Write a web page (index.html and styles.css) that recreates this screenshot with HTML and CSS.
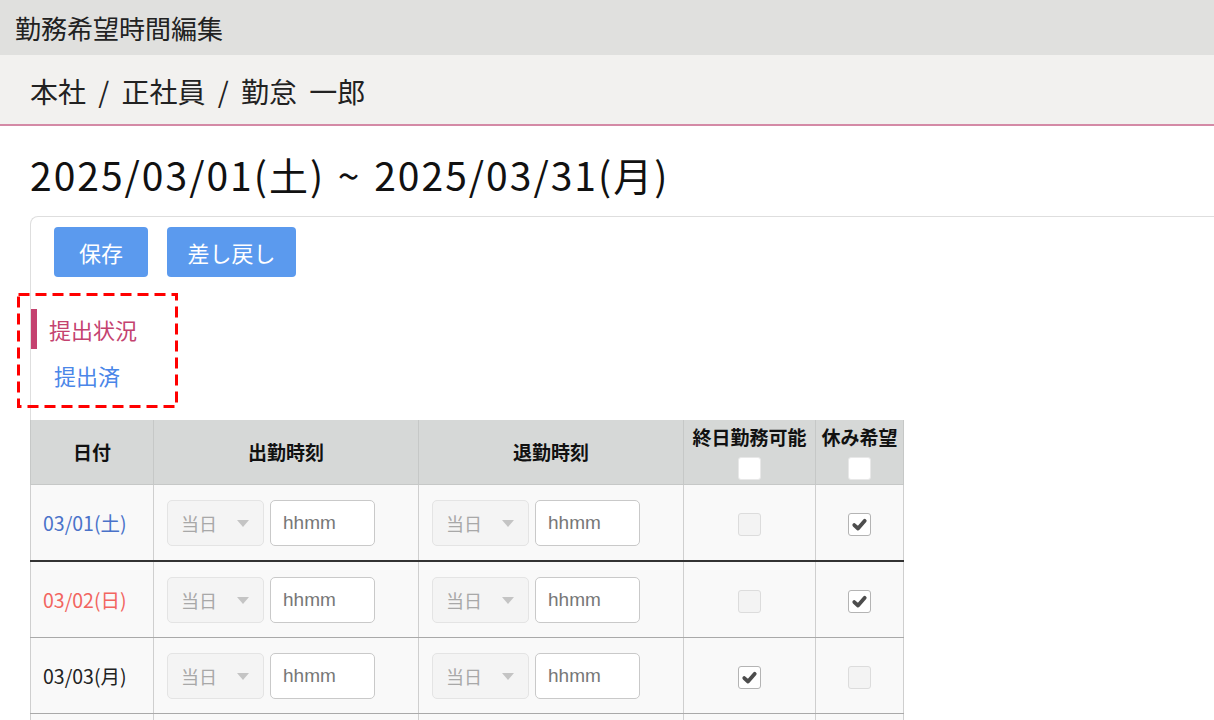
FILE: index.html
```html
<!DOCTYPE html>
<html lang="ja">
<head>
    <meta charset="UTF-8">
    <meta name="viewport" content="width=device-width, initial-scale=1.0">
    <title>勤務希望時間編集</title>
    <link rel="stylesheet" href="styles.css">
</head>
<body>

    <!-- Title bar -->
    <div class="titlebar">勤務希望時間編集</div>

    <!-- Employee -->
    <div class="subbar">本社 / 正社員 / 勤怠 一郎</div>

    <h1 class="period">2025/03/01(土) ~ 2025/03/31(月)</h1>

    <div class="panel">
        <div class="actions">
            <button class="btn">保存</button>
            <button class="btn">差し戻し</button>
        </div>

        <div class="status">
            <div class="status-label">提出状況</div>
            <div class="status-value">提出済</div>
            <svg class="mark" width="161" height="115" viewBox="0 0 161 115">
                <rect x="1.5" y="1.5" width="158" height="112" fill="none" stroke="#ff0000" stroke-width="3" stroke-dasharray="11 6"/>
            </svg>
        </div>

        <table class="shift">
            <thead>
                <tr>
                    <th class="col-date">日付</th>
                    <th class="col-time">出勤時刻</th>
                    <th class="col-time">退勤時刻</th>
                    <th class="col-check">終日勤務可能<br><span class="cb head"></span></th>
                    <th>休み希望<br><span class="cb head"></span></th>
                </tr>
            </thead>
            <tbody>
                <tr class="week-end">
                    <td class="date sat">03/01(土)</td>
                    <td><div class="time"><div class="sel">当日<i></i></div><div class="inp">hhmm</div></div></td>
                    <td><div class="time"><div class="sel">当日<i></i></div><div class="inp">hhmm</div></div></td>
                    <td class="c"><span class="cb off"></span></td>
                    <td class="c"><span class="cb on"><svg viewBox="0 0 20 20"><path d="M5 10.5 L8.6 13.8 L15 6.5" fill="none" stroke="#4d4d4d" stroke-width="3.6" stroke-linecap="round" stroke-linejoin="round"/></svg></span></td>
                </tr>
                <tr>
                    <td class="date sun">03/02(日)</td>
                    <td><div class="time"><div class="sel">当日<i></i></div><div class="inp">hhmm</div></div></td>
                    <td><div class="time"><div class="sel">当日<i></i></div><div class="inp">hhmm</div></div></td>
                    <td class="c"><span class="cb off"></span></td>
                    <td class="c"><span class="cb on"><svg viewBox="0 0 20 20"><path d="M5 10.5 L8.6 13.8 L15 6.5" fill="none" stroke="#4d4d4d" stroke-width="3.6" stroke-linecap="round" stroke-linejoin="round"/></svg></span></td>
                </tr>
                <tr>
                    <td class="date">03/03(月)</td>
                    <td><div class="time"><div class="sel">当日<i></i></div><div class="inp">hhmm</div></div></td>
                    <td><div class="time"><div class="sel">当日<i></i></div><div class="inp">hhmm</div></div></td>
                    <td class="c"><span class="cb on"><svg viewBox="0 0 20 20"><path d="M5 10.5 L8.6 13.8 L15 6.5" fill="none" stroke="#4d4d4d" stroke-width="3.6" stroke-linecap="round" stroke-linejoin="round"/></svg></span></td>
                    <td class="c"><span class="cb off"></span></td>
                </tr>
                <tr>
                    <td class="date">03/04(火)</td>
                    <td><div class="time"><div class="sel">当日<i></i></div><div class="inp">hhmm</div></div></td>
                    <td><div class="time"><div class="sel">当日<i></i></div><div class="inp">hhmm</div></div></td>
                    <td class="c"><span class="cb off"></span></td>
                    <td class="c"><span class="cb off"></span></td>
                </tr>
            </tbody>
        </table>
    </div>

</body>
</html>
```

FILE: styles.css
```css
body {
    margin: 0;
    font-family: "Noto Sans CJK JP", sans-serif;
    color: #222;
    background: #fff;
    overflow: hidden;
}

.titlebar {
    height: 55px;
    line-height: 55px;
    padding-left: 15px;
    font-size: 26px;
    background-color: #e0e0de;
}

.subbar {
    height: 69px;
    line-height: 72px;
    padding-left: 30px;
    font-size: 28px;
    word-spacing: 6px;
    background-color: #f2f1ef;
    border-bottom: 2px solid #d48aa6;
}

.period {
    margin: 0;
    padding: 20px 0 0 30px;
    height: 70px;
    font-size: 39px;
    font-weight: normal;
    letter-spacing: 2px;
    word-spacing: 2px;
    line-height: 56px;
    color: #111;
}

.panel {
    position: relative;
    margin-left: 30px;
    margin-right: -20px;
    border: 1px solid #dedede;
    border-right: none;
    border-radius: 8px 0 0 0;
}

.actions {
    display: flex;
    gap: 19px;
    padding: 10px 0 0 23px;
}

.btn {
    width: 94px;
    height: 50px;
    padding: 0;
    border: none;
    border-radius: 4px;
    background-color: #5b9aee;
    color: #fff;
    font-family: "Noto Sans CJK JP", sans-serif;
    font-size: 22px;
}
.btn + .btn {
    width: 129px;
}

.status {
    padding: 32px 0 25px 0;
    font-size: 22px;
}
.status-label {
    height: 40px;
    line-height: 40px;
    border-left: 6px solid #c4426f;
    padding-left: 12px;
    color: #c4426f;
}
.status-value {
    height: 46px;
    line-height: 52px;
    padding-left: 23px;
    color: #4a86e8;
}
.mark {
    position: absolute;
    left: -14px;
    top: 76px;
}

.shift {
    border-collapse: collapse;
    margin-left: -1px;
    table-layout: fixed;
    width: 874px;
}
.shift th {
    height: 64px;
    padding: 0;
    background-color: #d6d8d7;
    border: 1px solid #c6c8c7;
    border-top: none;
    font-size: 19px;
    font-weight: bold;
    color: #111;
    line-height: 24px;
}
.col-date { width: 122px; }
.col-time { width: 264px; }
.col-check { width: 131px; }

.shift td {
    height: 75px;
    padding: 0;
    background-color: #f9f9f9;
    border: 1px solid #cfcfcf;
    border-bottom-color: #a9a9a9;
}
.shift .week-end td {
    border-bottom: 2px solid #333;
}

.date {
    padding-left: 12px !important;
    font-size: 19.5px;
    color: #222;
}
.sat { color: #4a72c9; }
.sun { color: #f2655f; }

.time {
    display: flex;
    gap: 6px;
    padding-left: 13px;
}
.sel {
    position: relative;
    box-sizing: border-box;
    width: 97px;
    height: 46px;
    line-height: 44px;
    padding-left: 13px;
    background-color: #f4f4f4;
    border: 1px solid #e4e4e4;
    border-radius: 5px;
    color: #a8a8a8;
    font-size: 18px;
}
.sel i {
    position: absolute;
    right: 14px;
    top: 19px;
    border-left: 6px solid transparent;
    border-right: 6px solid transparent;
    border-top: 7px solid #c4c4c4;
}
.inp {
    box-sizing: border-box;
    width: 105px;
    height: 46px;
    line-height: 44px;
    padding-left: 12px;
    background-color: #fff;
    border: 1px solid #c9c9c9;
    border-radius: 5px;
    color: #777;
    font-family: "Liberation Sans", sans-serif;
    font-size: 19px;
}

.c {
    text-align: center;
}
.cb {
    display: inline-block;
    box-sizing: border-box;
    width: 23px;
    height: 23px;
    border-radius: 3px;
    vertical-align: middle;
}
.cb svg {
    display: block;
    width: 21px;
    height: 21px;
}
.cb.head {
    margin-top: 8px;
    background-color: #fff;
    border: 1px solid #e8e8e8;
}
.cb.off {
    background-color: #f3f3f3;
    border: 1px solid #dcdcdc;
}
.cb.on {
    background-color: #fff;
    border: 1px solid #b4b4b4;
}
```
